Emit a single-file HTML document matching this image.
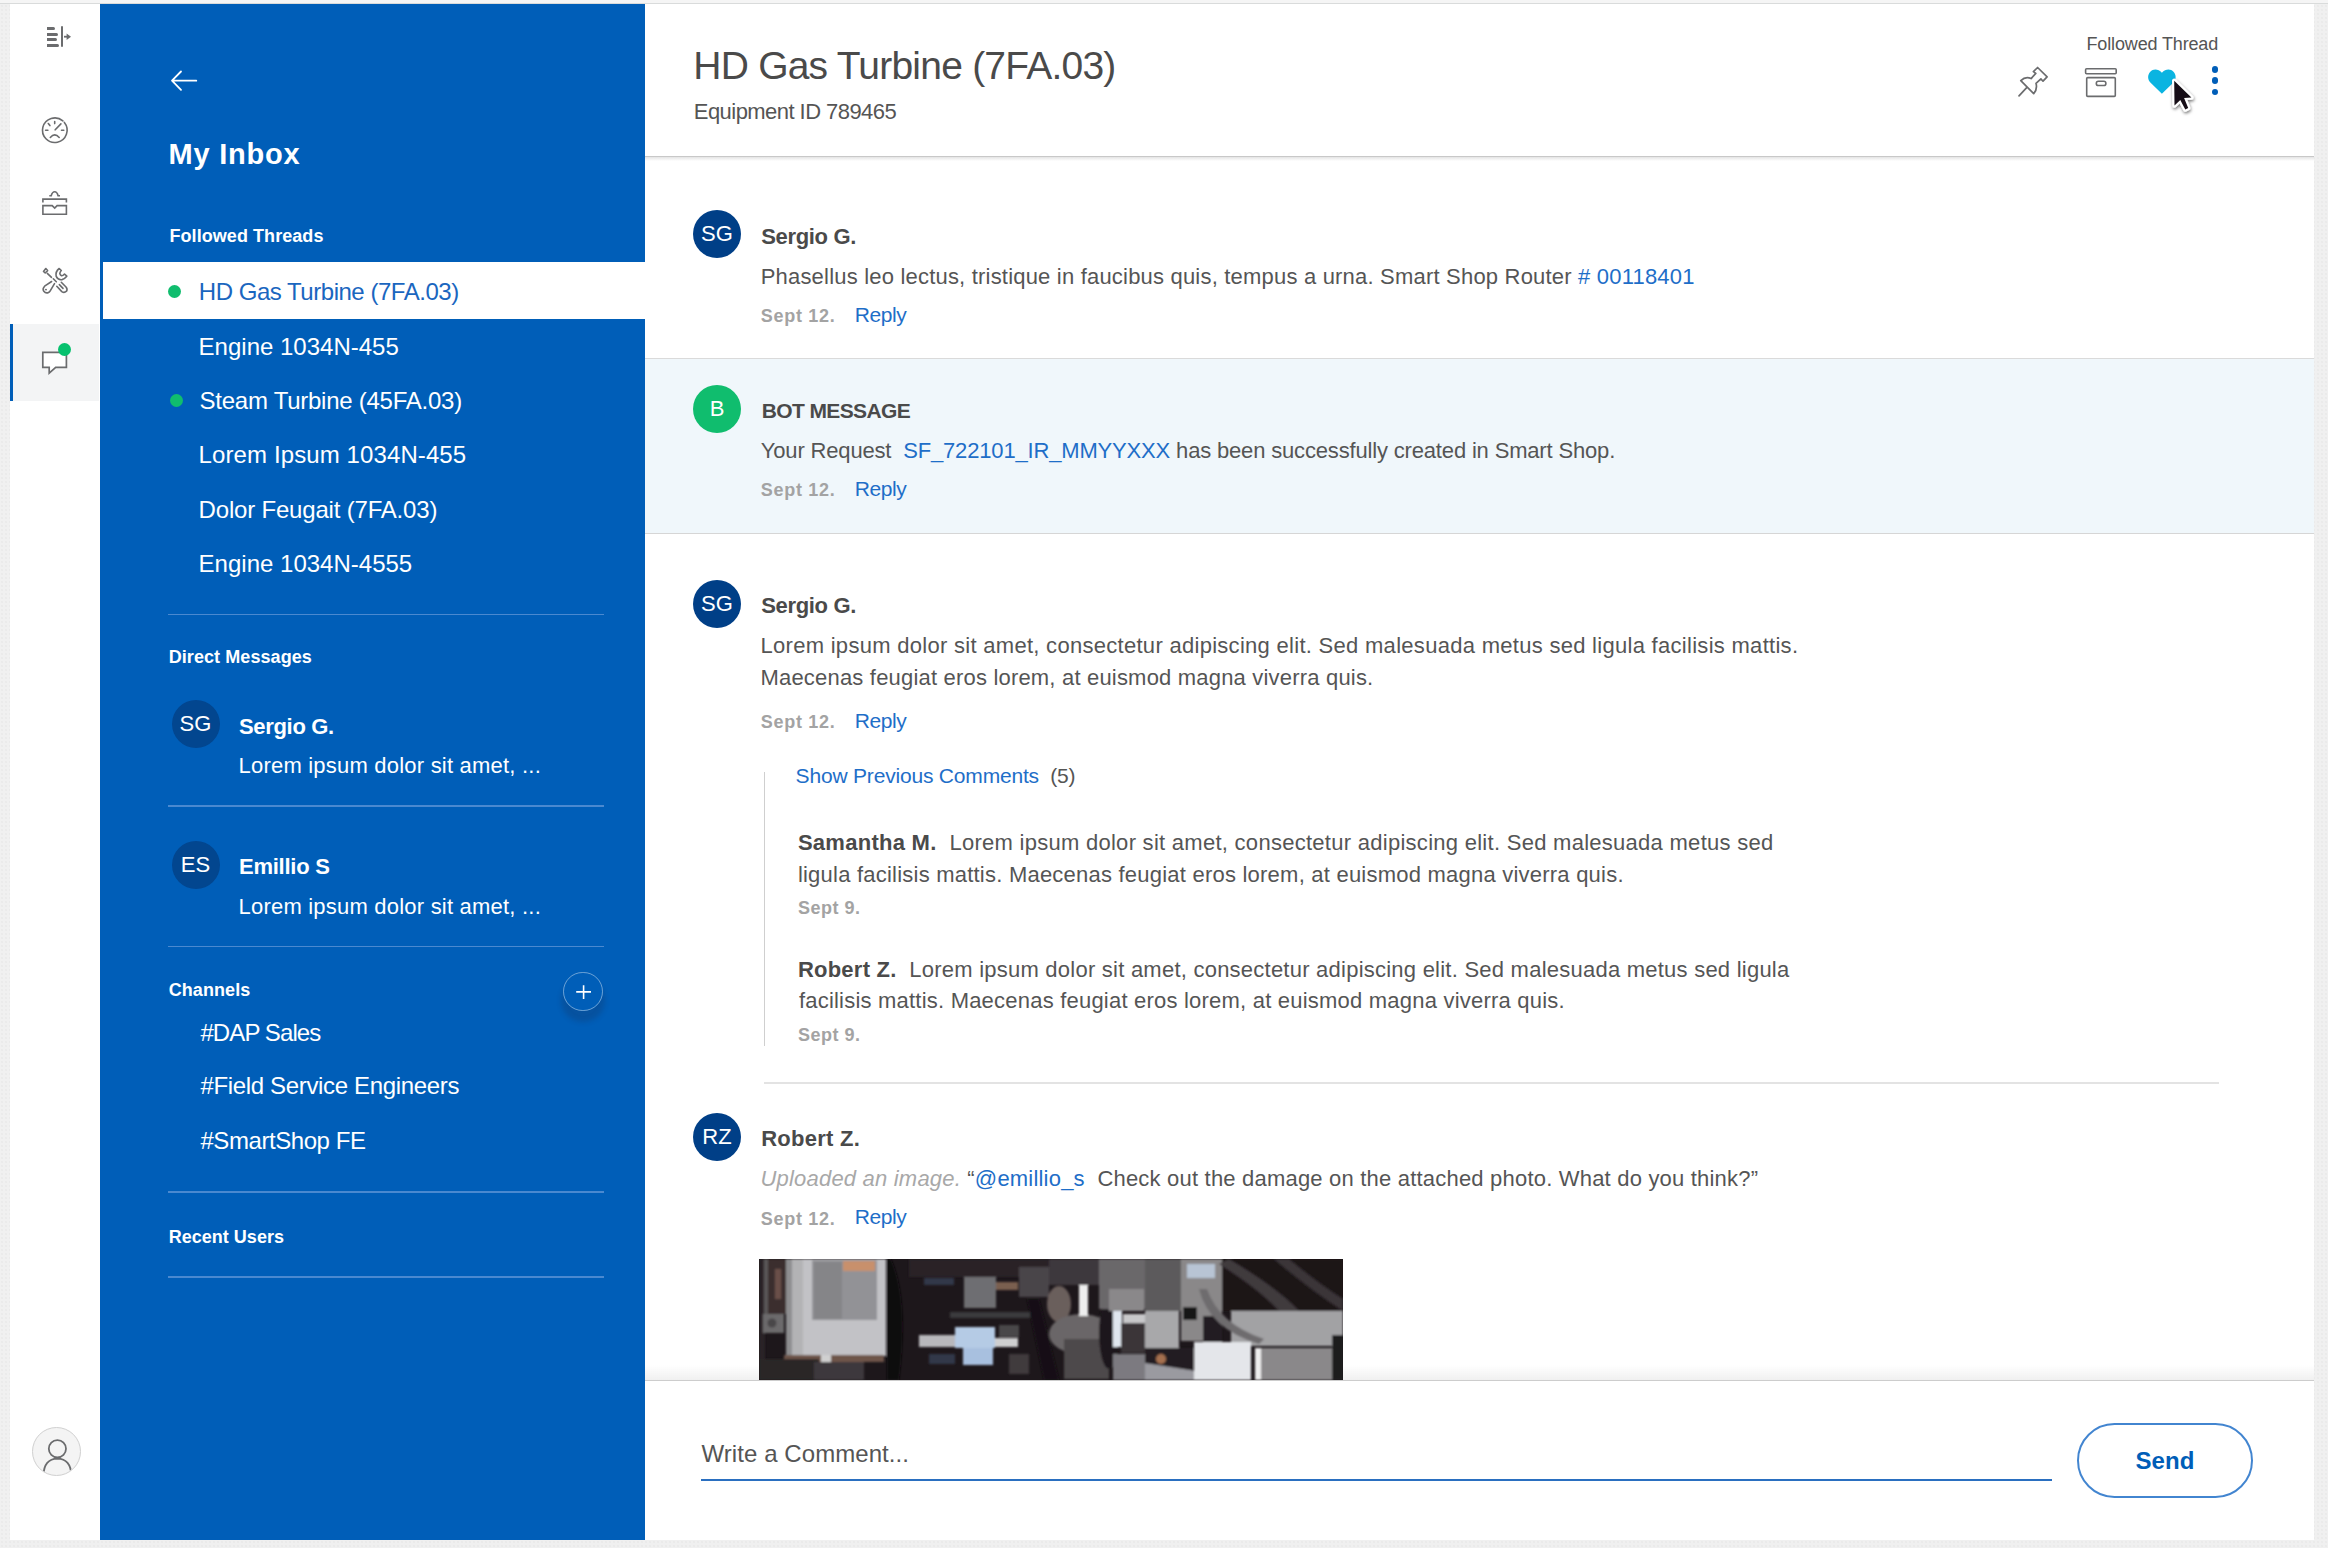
<!DOCTYPE html>
<html><head><meta charset="utf-8"><style>
*{box-sizing:border-box;margin:0;padding:0}
html,body{width:2328px;height:1548px;overflow:hidden;background:#f0f0f0;font-family:"Liberation Sans",sans-serif}
body{background:#f0f0f0 radial-gradient(circle,#e7e7e7 0.6px,rgba(0,0,0,0) 0.9px) 0 0/4px 4px}
.abs{position:absolute}
.t{position:absolute;white-space:nowrap;line-height:1;font-family:"Liberation Sans",sans-serif}
.sep{position:absolute;left:168px;width:436px;height:1.5px;background:#4a89d0}
.dot{position:absolute;width:13px;height:13px;border-radius:50%;background:#10bd6e}
.av{position:absolute;width:48px;height:48px;border-radius:50%;}
svg{position:absolute;overflow:visible}
</style></head><body>
<div class="abs" style="left:0;top:0;width:2328px;height:3px;background:#f5f5f5"></div>
<div class="abs" style="left:0;top:3px;width:2328px;height:1px;background:#d9dbdb"></div>
<div class="abs" style="left:10px;top:4px;width:90px;height:1536px;background:#fff"></div>
<div class="abs" style="left:100px;top:4px;width:545px;height:1536px;background:#005eb8"></div>
<div class="abs" style="left:645px;top:4px;width:1669px;height:1536px;background:#fff"></div>
<div class="abs" style="left:47px;top:26.5px;width:8.3px;height:3px;background:#6b6c6e;border-radius:0 1.5px 1.5px 0"></div>
<div class="abs" style="left:47px;top:32.5px;width:10.6px;height:3px;background:#6b6c6e;border-radius:0 1.5px 1.5px 0"></div>
<div class="abs" style="left:47px;top:38.2px;width:9.6px;height:3px;background:#6b6c6e;border-radius:0 1.5px 1.5px 0"></div>
<div class="abs" style="left:47px;top:43.8px;width:11.7px;height:3px;background:#6b6c6e;border-radius:0 1.5px 1.5px 0"></div>
<div class="abs" style="left:60.8px;top:26px;width:2.2px;height:21px;background:#6b6c6e;border-radius:1px"></div>
<svg style="left:0;top:0" width="100" height="60"><path d="M64 36.7 H68" stroke="#6b6c6e" stroke-width="1.8"/><path d="M66.6 33.4 L71 36.7 L66.6 40 Z" fill="#6b6c6e"/></svg>
<svg style="left:0;top:0" width="100" height="400" fill="none" stroke="#6b6c6e" stroke-width="1.6" stroke-linecap="round">
<path d="M64.36 122.46 A12.3 12.3 0 1 1 62.87 120.92"/>
<path d="M54.7 121.6 V123.6 M45.6 130.3 H47.9 M61.5 130.3 H63.8 M48.3 123.5 L49.9 125.6 M55.2 129.8 L60.9 123.9"/>
<path d="M50.3 137.5 Q54.7 132.2 59.2 137.5"/>
</svg>
<svg style="left:0;top:0" width="100" height="400" fill="none" stroke="#6b6c6e" stroke-width="1.6">
<path d="M49.3 195.8 H51.2 Q52.3 191.8 54.7 191.8 Q57.1 191.8 58.1 195.8 H60"/>
<path d="M42.9 202.6 V199.1 H66.4 V202.6"/>
<path d="M42.9 205.6 H52.2 L54.7 208.1 L57.1 205.6 H66.4 V214.2 H42.9 Z"/>
</svg>
<svg style="left:0;top:0" width="100" height="400" fill="none" stroke="#6b6c6e" stroke-width="1.6" stroke-linecap="round" stroke-linejoin="round">
<path d="M43.5 271.5 L45.8 268.5 L47.6 270.6 L45.2 273 Z"/>
<path d="M47.3 273.4 L51.5 277.3"/>
<path d="M53.3 278.8 L56.3 281.8"/>
<path d="M51.6 281.5 L44.6 286.2 Q42.3 288.5 43.6 291 Q45.8 293.8 48.5 292.5 Q49.5 292 50.2 290.8 L54.5 283.6"/>
<path d="M45.8 289.5 L46.2 289.7"/>
<path d="M59.2 268.5 Q55.2 271.5 56.2 276.4 Q58 280.2 62 279.6 Q64.3 279.2 66.8 276.2 L64.5 274 Q62.8 276 61.5 275.8 Q60 275 59.8 273.4 Q60.2 271.6 61.3 270.5 Z"/>
<path d="M61.3 282.3 L66 287 Q67.8 289.2 66.5 291.2 Q64.3 293.2 61.8 291.6 L56.8 286.3"/>
<path d="M59.4 284.6 L63 288.4"/>
</svg>
<div class="abs" style="left:10px;top:324px;width:89px;height:77px;background:#f3f4f5"></div>
<div class="abs" style="left:10px;top:324px;width:3px;height:77px;background:#005eb8"></div>
<svg style="left:0;top:0" width="100" height="400" stroke="#6b6c6e" stroke-width="1.7" stroke-linejoin="miter">
<path d="M42.8 352.4 H66.4 V367.3 H55.7 L49.2 373.2 V367.3 H42.8 Z" fill="#fff"/>
</svg>
<div class="abs" style="left:57.8px;top:342.8px;width:13.2px;height:13.2px;border-radius:50%;background:#06c16e"></div>
<div class="abs" style="left:32px;top:1427px;width:49px;height:49px;border-radius:50%;background:#f4f4f4;border:1px solid #d0d0d0;overflow:hidden"><svg style="left:0;top:0" width="49" height="49" fill="none" stroke="#6b6c6e" stroke-width="1.8"><circle cx="24.4" cy="20.8" r="8.6"/><path d="M10.5 47 Q11 31 24.4 30.6 Q37.8 31 38.3 47"/></svg></div>
<svg style="left:0;top:0" width="300" height="120" fill="none" stroke="#fff" stroke-width="1.8"><path d="M196.3 80.7 H172.5 M181 71.5 L172 80.7 L181 89.8" stroke-linecap="round" stroke-linejoin="round"/></svg>
<div class="t" style="left:168.5px;top:139.8px;font-size:29px;font-weight:700;color:#fff;letter-spacing:0.771px;">My Inbox</div>
<div class="t" style="left:169.5px;top:227.3px;font-size:18px;font-weight:700;color:#fff;letter-spacing:0.060px;">Followed Threads</div>
<div class="abs" style="left:103px;top:262px;width:542px;height:57px;background:#fff"></div>
<div class="dot" style="left:168px;top:285.3px;"></div>
<div class="t" style="left:198.8px;top:280.2px;font-size:24px;font-weight:400;color:#1a66bf;letter-spacing:-0.473px;">HD Gas Turbine (7FA.03)</div>
<div class="t" style="left:198.6px;top:334.6px;font-size:24px;font-weight:400;color:#fff;letter-spacing:0.000px;">Engine 1034N-455</div>
<div class="dot" style="left:170px;top:394.4px;"></div>
<div class="t" style="left:199.6px;top:388.6px;font-size:24px;font-weight:400;color:#fff;letter-spacing:-0.255px;">Steam Turbine (45FA.03)</div>
<div class="t" style="left:198.6px;top:443.1px;font-size:24px;font-weight:400;color:#fff;letter-spacing:0.105px;">Lorem Ipsum 1034N-455</div>
<div class="t" style="left:198.6px;top:497.7px;font-size:24px;font-weight:400;color:#fff;letter-spacing:-0.190px;">Dolor Feugait (7FA.03)</div>
<div class="t" style="left:198.6px;top:552.2px;font-size:24px;font-weight:400;color:#fff;letter-spacing:0.006px;">Engine 1034N-4555</div>
<div class="sep" style="top:613.7px"></div>
<div class="t" style="left:168.7px;top:647.8px;font-size:18px;font-weight:700;color:#fff;letter-spacing:0.079px;">Direct Messages</div>
<div class="av" style="left:171.5px;top:700px;background:#02468f"></div>
<div class="t" style="left:171.5px;top:713.4px;font-size:22px;font-weight:400;color:#fff;width:48px;text-align:center">SG</div>
<div class="t" style="left:239.0px;top:716.2px;font-size:22px;font-weight:700;color:#fff;letter-spacing:-0.325px;">Sergio G.</div>
<div class="t" style="left:238.5px;top:755.2px;font-size:22px;font-weight:400;color:#fff;letter-spacing:0.213px;">Lorem ipsum dolor sit amet, ...</div>
<div class="av" style="left:171.5px;top:841px;background:#02468f"></div>
<div class="t" style="left:171.5px;top:854.4px;font-size:22px;font-weight:400;color:#fff;width:48px;text-align:center">ES</div>
<div class="t" style="left:239.0px;top:856.2px;font-size:22px;font-weight:700;color:#fff;letter-spacing:-0.250px;">Emillio S</div>
<div class="t" style="left:238.5px;top:895.7px;font-size:22px;font-weight:400;color:#fff;letter-spacing:0.213px;">Lorem ipsum dolor sit amet, ...</div>
<div class="sep" style="top:805.3px"></div>
<div class="sep" style="top:945.9px"></div>
<div class="t" style="left:168.7px;top:980.8px;font-size:18px;font-weight:700;color:#fff;letter-spacing:0.086px;">Channels</div>
<div class="abs" style="left:563px;top:971.5px;width:39.5px;height:39.5px;border-radius:50%;border:1.6px solid rgba(255,255,255,.42);box-shadow:0 9px 5px 2px rgba(25,45,85,.24)"></div>
<svg style="left:0;top:0" width="650" height="1100" stroke="#fff" stroke-width="1.6"><path d="M583.6 985.2 V998.9 M576.2 991.9 H591"/></svg>
<div class="t" style="left:200.4px;top:1020.5px;font-size:24px;font-weight:400;color:#fff;letter-spacing:-0.900px;">#DAP Sales</div>
<div class="t" style="left:200.4px;top:1074.2px;font-size:24px;font-weight:400;color:#fff;letter-spacing:-0.339px;">#Field Service Engineers</div>
<div class="t" style="left:200.4px;top:1129.0px;font-size:24px;font-weight:400;color:#fff;letter-spacing:-0.425px;">#SmartShop FE</div>
<div class="sep" style="top:1191.1px"></div>
<div class="t" style="left:168.7px;top:1227.5px;font-size:18px;font-weight:700;color:#fff;letter-spacing:0.018px;">Recent Users</div>
<div class="sep" style="top:1276.3px"></div>
<div class="t" style="left:693.3px;top:46.0px;font-size:39px;font-weight:400;color:#4a4a4a;letter-spacing:-0.773px;">HD Gas Turbine (7FA.03)</div>
<div class="t" style="left:693.8px;top:100.9px;font-size:22px;font-weight:400;color:#555;letter-spacing:-0.550px;">Equipment ID 789465</div>
<div class="abs" style="left:645px;top:155.8px;width:1669px;height:1.4px;background:#c8c8c8"></div>
<div class="abs" style="left:645px;top:157.2px;width:1669px;height:4px;background:linear-gradient(to bottom,#e4e4e4,rgba(255,255,255,0))"></div>
<div class="t" style="left:2086.5px;top:35.3px;font-size:18px;font-weight:400;color:#555;letter-spacing:-0.143px;">Followed Thread</div>
<svg style="left:2012px;top:60px" width="40" height="40" fill="none" stroke="#6b6c6e" stroke-width="1.7" stroke-linejoin="round" stroke-linecap="round">
<path d="M7 35.8 L14.7 27.6"/>
<path d="M8.8 20.7 C12 17.6 16 17.2 19.1 18.6 L23.8 13.4 L21.4 11.6 L25.6 7.5 L35.1 16.8 L31 21.2 L28.9 18.9 L24 23.3 C25 27 24.5 30.5 21.7 33.6 Z"/>
</svg>
<svg style="left:2080px;top:60px" width="50" height="50" fill="none" stroke="#6b6c6e" stroke-width="1.6">
<rect x="5.6" y="8.8" width="30.6" height="5" rx="1"/>
<rect x="6.7" y="17.6" width="28.6" height="18.8" rx="1"/>
<rect x="16.3" y="21.3" width="9.6" height="4.2" rx="2.1"/>
</svg>
<svg style="left:2140px;top:60px" width="50" height="50"><path d="M21.9 33.8 L10.6 22.8 C7.5 19.8 7.3 15 10.3 11.8 C13.3 8.6 18.3 8.8 21.9 12.8 C25.5 8.8 30.5 8.6 33.5 11.8 C36.5 15 36.3 19.8 33.2 22.8 Z" fill="#0ab4e1"/></svg>
<svg style="left:2160px;top:70px" width="50" height="50"><defs><filter id="cs" x="-50%" y="-50%" width="200%" height="200%"><feDropShadow dx="0.6" dy="1.6" stdDeviation="1.6" flood-color="#000" flood-opacity="0.55"/></filter></defs>
<path d="M14.2 10.8 L14.5 35.5 L20.3 29.9 L25.3 39.5 L28.2 38.0 L24.1 27.9 L31.4 27.6 Z" fill="#150f14" stroke="#fff" stroke-width="4.4" stroke-linejoin="round" paint-order="stroke" filter="url(#cs)"/>
</svg>
<div class="abs" style="left:2211.5px;top:66.2px;width:6.6px;height:6.6px;border-radius:50%;background:#005eb8"></div>
<div class="abs" style="left:2211.5px;top:77.3px;width:6.6px;height:6.6px;border-radius:50%;background:#005eb8"></div>
<div class="abs" style="left:2211.5px;top:88.6px;width:6.6px;height:6.6px;border-radius:50%;background:#005eb8"></div>
<div class="av" style="left:693px;top:210px;background:#003f87"></div>
<div class="t" style="left:693px;top:223.4px;font-size:22px;font-weight:400;color:#fff;width:48px;text-align:center">SG</div>
<div class="t" style="left:761.2px;top:225.7px;font-size:22px;font-weight:700;color:#4a4a4a;letter-spacing:-0.325px;">Sergio G.</div>
<div class="t" style="left:760.7px;top:265.7px;font-size:22px;font-weight:400;color:#555;letter-spacing:0.198px;">Phasellus leo lectus, tristique in faucibus quis, tempus a urna. Smart Shop Router <span style="color:#1e6ec8"># 00118401</span></div>
<div class="t" style="left:760.8px;top:307.2px;font-size:18px;font-weight:700;color:#a3a3a3;letter-spacing:0.714px;">Sept 12.</div>
<div class="t" style="left:854.7px;top:303.9px;font-size:21px;font-weight:400;color:#1e6ec8;letter-spacing:-0.425px;">Reply</div>
<div class="abs" style="left:645px;top:357.8px;width:1669px;height:176px;background:#f0f7fb;border-top:1.4px solid #dadada;border-bottom:1.6px solid #d6d6d6"></div>
<div class="av" style="left:693px;top:384.6px;background:#10bd6e"></div>
<div class="t" style="left:693px;top:398.0px;font-size:22px;font-weight:400;color:#fff;width:48px;text-align:center">B</div>
<div class="t" style="left:761.7px;top:400.3px;font-size:21px;font-weight:700;color:#4a4a4a;letter-spacing:-0.610px;">BOT MESSAGE</div>
<div class="t" style="left:760.8px;top:440.0px;font-size:22px;font-weight:400;color:#555;letter-spacing:-0.167px;">Your Request&nbsp; <span style="color:#1e6ec8">SF_722101_IR_MMYYXXX</span> has been successfully created in Smart Shop.</div>
<div class="t" style="left:760.8px;top:481.4px;font-size:18px;font-weight:700;color:#a3a3a3;letter-spacing:0.714px;">Sept 12.</div>
<div class="t" style="left:854.7px;top:478.1px;font-size:21px;font-weight:400;color:#1e6ec8;letter-spacing:-0.425px;">Reply</div>
<div class="av" style="left:693px;top:580px;background:#003f87"></div>
<div class="t" style="left:693px;top:593.4px;font-size:22px;font-weight:400;color:#fff;width:48px;text-align:center">SG</div>
<div class="t" style="left:761.2px;top:594.7px;font-size:22px;font-weight:700;color:#4a4a4a;letter-spacing:-0.325px;">Sergio G.</div>
<div class="t" style="left:760.5px;top:635.0px;font-size:22px;font-weight:400;color:#555;letter-spacing:0.288px;">Lorem ipsum dolor sit amet, consectetur adipiscing elit. Sed malesuada metus sed ligula facilisis mattis.</div>
<div class="t" style="left:760.5px;top:666.7px;font-size:22px;font-weight:400;color:#555;letter-spacing:0.191px;">Maecenas feugiat eros lorem, at euismod magna viverra quis.</div>
<div class="t" style="left:760.8px;top:713.3px;font-size:18px;font-weight:700;color:#a3a3a3;letter-spacing:0.714px;">Sept 12.</div>
<div class="t" style="left:854.7px;top:710.0px;font-size:21px;font-weight:400;color:#1e6ec8;letter-spacing:-0.425px;">Reply</div>
<div class="abs" style="left:763.5px;top:772px;width:1.5px;height:274px;background:#cfcfcf"></div>
<div class="t" style="left:795.6px;top:765.1px;font-size:21px;font-weight:400;color:#555;letter-spacing:-0.188px;"><span style="color:#1e6ec8">Show Previous Comments</span>&nbsp; (5)</div>
<div class="t" style="left:797.9px;top:832.4px;font-size:22px;font-weight:400;color:#555;letter-spacing:0.274px;"><b style="color:#4a4a4a">Samantha M.</b>&nbsp; Lorem ipsum dolor sit amet, consectetur adipiscing elit. Sed malesuada metus sed</div>
<div class="t" style="left:797.9px;top:863.6px;font-size:22px;font-weight:400;color:#555;letter-spacing:0.224px;">ligula facilisis mattis. Maecenas feugiat eros lorem, at euismod magna viverra quis.</div>
<div class="t" style="left:797.9px;top:899.0px;font-size:18px;font-weight:700;color:#a3a3a3;letter-spacing:0.517px;">Sept 9.</div>
<div class="t" style="left:797.9px;top:958.7px;font-size:22px;font-weight:400;color:#555;letter-spacing:0.236px;"><b style="color:#4a4a4a">Robert Z.</b>&nbsp; Lorem ipsum dolor sit amet, consectetur adipiscing elit. Sed malesuada metus sed ligula</div>
<div class="t" style="left:798.9px;top:990.4px;font-size:22px;font-weight:400;color:#555;letter-spacing:0.213px;">facilisis mattis. Maecenas feugiat eros lorem, at euismod magna viverra quis.</div>
<div class="t" style="left:797.9px;top:1025.8px;font-size:18px;font-weight:700;color:#a3a3a3;letter-spacing:0.517px;">Sept 9.</div>
<div class="abs" style="left:763.5px;top:1081.5px;width:1455px;height:2px;background:#e3e3e3"></div>
<div class="av" style="left:693px;top:1112.6px;background:#003f87"></div>
<div class="t" style="left:693px;top:1126.0px;font-size:22px;font-weight:400;color:#fff;width:48px;text-align:center">RZ</div>
<div class="t" style="left:761.2px;top:1128.0px;font-size:22px;font-weight:700;color:#4a4a4a;letter-spacing:0.275px;">Robert Z.</div>
<div class="t" style="left:760.5px;top:1167.7px;font-size:22px;font-weight:400;color:#555;letter-spacing:0.200px;"><i style="color:#a8a8a8">Uploaded an image.</i> “<span style="color:#1e6ec8">@emillio_s</span>&nbsp; Check out the damage on the attached photo. What do you think?”</div>
<div class="t" style="left:760.8px;top:1209.6px;font-size:18px;font-weight:700;color:#a3a3a3;letter-spacing:0.714px;">Sept 12.</div>
<div class="t" style="left:854.7px;top:1206.3px;font-size:21px;font-weight:400;color:#1e6ec8;letter-spacing:-0.425px;">Reply</div>
<div class="abs" style="left:645px;top:1365px;width:1669px;height:15px;background:linear-gradient(to bottom,rgba(0,0,0,0),rgba(0,0,0,.06))"></div>
<svg style="left:759px;top:1258.5px" width="584" height="121" viewBox="0 0 584 121">
<defs><filter id="bl" x="-5%" y="-5%" width="110%" height="110%"><feGaussianBlur stdDeviation="1.3"/></filter><clipPath id="cp"><rect width="584" height="121"/></clipPath></defs>
<g clip-path="url(#cp)">
<rect width="584" height="121" fill="#1d171b"/>
<g filter="url(#bl)">
<rect x="0" y="0" width="6" height="121" fill="#2a2226"/>
<rect x="5" y="0" width="4" height="60" fill="#5a5658"/>
<rect x="9" y="0" width="18" height="55" fill="#3a2e2e"/>
<rect x="16" y="10" width="6" height="30" fill="#6a5048"/>
<rect x="4" y="55" width="21" height="19" fill="#6c6a6c"/>
<circle cx="13" cy="64" r="4.5" fill="#4a4648"/>
<rect x="27" y="0" width="7" height="100" fill="#8e8e90"/>
<rect x="33" y="0" width="12" height="100" fill="#b3b3b5"/>
<rect x="44" y="0" width="83" height="97" fill="#c2c2c6"/>
<rect x="53" y="1" width="65" height="60" fill="#929296"/>
<rect x="55" y="3" width="28" height="57" fill="#858588"/>
<rect x="84" y="2" width="32" height="10" fill="#c8906c"/>
<rect x="25" y="96" width="100" height="7" fill="#6e5448"/>
<rect x="62" y="96" width="10" height="12" fill="#d0d0d0"/>
<rect x="0" y="100" width="60" height="21" fill="#2c2528"/>
<rect x="55" y="103" width="50" height="18" fill="#3e383c"/>
<path d="M132 0 Q150 40 140 121 L128 121 L128 0 Z" fill="#0f0b0e"/>
<rect x="150" y="0" width="45" height="18" fill="#2a2428"/>
<rect x="165" y="19" width="30" height="7" fill="#33384a"/>
<rect x="160" y="76" width="40" height="12" fill="#b8b8bc"/>
<rect x="170" y="95" width="26" height="10" fill="#303848"/>
<rect x="191" y="0" width="100" height="18" fill="#2a2427"/>
<rect x="205" y="18" width="32" height="31" fill="#6e6e72"/>
<rect x="237" y="23" width="22" height="8" fill="#7a5e50"/>
<rect x="260" y="8" width="30" height="30" fill="#4a4448"/>
<rect x="191" y="53" width="80" height="6" fill="#3a3a3c"/>
<rect x="196" y="68" width="40" height="21" fill="#b5cbe5"/>
<rect x="204" y="89" width="30" height="17" fill="#a8c0df"/>
<rect x="236" y="79" width="23" height="9" fill="#cfcfd0"/>
<rect x="240" y="66" width="20" height="12" fill="#4a4648"/>
<rect x="250" y="95" width="20" height="20" fill="#3f3b3e"/>
<path d="M268 40 L285 121 L300 121 L280 40 Z" fill="#141013"/>
<rect x="290" y="0" width="50" height="26" fill="#3e393c"/>
<ellipse cx="300" cy="45" rx="12" ry="18" fill="#6a5e5c"/>
<ellipse cx="322" cy="75" rx="32" ry="20" fill="#6a6668"/>
<rect x="305" y="80" width="45" height="40" fill="#4e494c"/>
<rect x="320" y="26" width="9" height="31" fill="#eeeeee"/>
<ellipse cx="350" cy="74" rx="10" ry="36" fill="#1e181c"/>
<rect x="354" y="48" width="9" height="40" fill="#dfe6ee"/>
<rect x="340" y="0" width="50" height="50" fill="#6a676a"/>
<rect x="350" y="30" width="35" height="22" fill="#8a888a"/>
<rect x="364" y="55" width="27" height="9" fill="#c8c8ca"/>
<rect x="362" y="64" width="24" height="30" fill="#3a3437"/>
<rect x="354" y="95" width="37" height="26" fill="#7c7a80"/>
<rect x="386" y="0" width="36" height="52" fill="#5c5a5c"/>
<rect x="386" y="52" width="34" height="37" fill="#a8a8aa"/>
<rect x="422" y="0" width="41" height="82" fill="#8a8889"/>
<rect x="428" y="5" width="28" height="14" fill="#b8c4d4"/>
<rect x="424" y="48" width="14" height="13" fill="#181215"/>
<rect x="386" y="89" width="48" height="28" fill="#231d22"/>
<circle cx="402" cy="100" r="5" fill="#a57050"/>
<path d="M386 104 L437 112 L437 121 L386 121 Z" fill="#9a9aa0"/>
<rect x="444" y="57" width="19" height="26" fill="#231d22"/>
<rect x="463" y="0" width="121" height="52" fill="#1a1418"/>
<path d="M470 0 Q520 30 540 52 L520 52 Q500 30 460 5 Z" fill="#403a3e"/>
<path d="M530 0 Q560 25 584 40 L584 52 Q550 30 515 0 Z" fill="#3a3438"/>
<rect x="472" y="52" width="112" height="35" fill="#a2a2a4"/>
<path d="M440 30 Q450 70 500 85 L505 80 Q460 65 448 30 Z" fill="#6e6c6e"/>
<rect x="435" y="83" width="57" height="38" fill="#e4e6ea"/>
<rect x="496" y="89" width="79" height="32" fill="#8a888a"/>
<rect x="496" y="89" width="6" height="32" fill="#eeeeee"/>
<rect x="573" y="76" width="11" height="45" fill="#1f1a1d"/>
</g>
</g>
</svg>
<div class="abs" style="left:645px;top:1380px;width:1669px;height:160px;background:#fff;border-top:1.5px solid #cdcdcd"></div>
<div class="t" style="left:701.5px;top:1441.7px;font-size:24px;font-weight:400;color:#555;letter-spacing:0.071px;">Write a Comment...</div>
<div class="abs" style="left:701px;top:1479px;width:1351px;height:2.2px;background:#2a6fc0"></div>
<div class="abs" style="left:2077px;top:1423px;width:175.5px;height:75px;border-radius:38px;border:2px solid #4285d0"></div>
<div class="t" style="left:2135.5px;top:1449.4px;font-size:24px;font-weight:700;color:#005eb8;letter-spacing:0.067px;">Send</div>
</body></html>
